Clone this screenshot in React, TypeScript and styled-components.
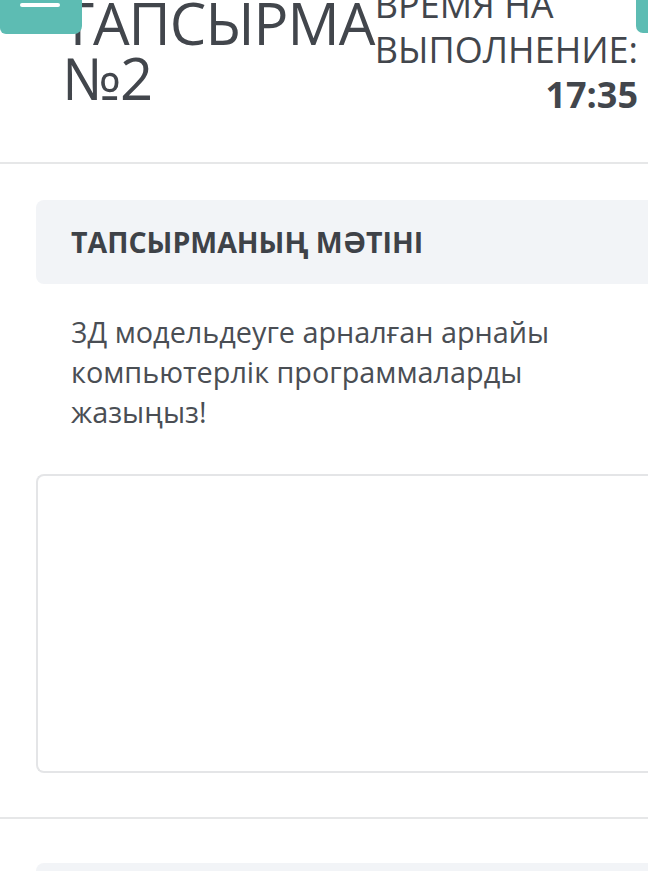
import React from "react";
import styled, { createGlobalStyle } from "styled-components";

const GlobalStyle = createGlobalStyle`
  html, body {
    margin: 0;
    padding: 0;
    background: #ffffff;
    font-family: "Open Sans", "Noto Sans", sans-serif;
    color: #42464c;
    overflow: hidden;
  }
`;

function App() {
  return (
    <>
      <GlobalStyle />
      <Page>
        <Header>
          <MenuButton aria-label="menu">
            <MenuBar />
          </MenuButton>
          <SideButton />
          <Title>
            ТАПСЫРМА
            <br />
            №2
          </Title>
          <Timer>
            <TimerLabel>
              ВРЕМЯ НА
              <br />
              ВЫПОЛНЕНИЕ:
            </TimerLabel>
            <TimerValue>17:35</TimerValue>
          </Timer>
        </Header>

        <Section>
          <Panel>
            <PanelTitle>ТАПСЫРМАНЫҢ МӘТІНІ</PanelTitle>
          </Panel>
          <TaskText>
            3Д модельдеуге арналған арнайы компьютерлік программаларды
            жазыңыз!
          </TaskText>
          <AnswerBox />
        </Section>

        <Section $top={44}>
          <Panel />
        </Section>
      </Page>
    </>
  );
}

export default App;

const Page = styled.div`
  width: 648px;
  height: 871px;
  overflow: hidden;
`;

const Header = styled.header`
  position: relative;
  margin-top: -18px;
  height: 182px;
  display: flex;
  align-items: flex-start;
  justify-content: space-between;
  padding: 0 10px 0 62px;
  border-bottom: 2px solid #e6e7e8;
  box-sizing: border-box;
`;

const MenuButton = styled.div`
  position: absolute;
  left: 0;
  top: 0;
  width: 82px;
  height: 52px;
  background: #5dbcb3;
  border-radius: 0 0 8px 6px;
  z-index: 2;
`;

const MenuBar = styled.div`
  position: absolute;
  left: 20px;
  top: 21px;
  width: 40px;
  height: 4px;
  border-radius: 2px;
  background: #ffffff;
`;

const SideButton = styled.div`
  position: absolute;
  right: -10px;
  top: 0;
  width: 22px;
  height: 51px;
  background: #5dbcb3;
  border-radius: 0 0 7px 7px;
`;

const Title = styled.h1`
  margin: 13px 0 0;
  font-size: 58px;
  line-height: 55px;
  font-weight: 400;
  color: #42464c;
  letter-spacing: -1px;
  white-space: nowrap;
`;

const Timer = styled.div`
  display: flex;
  flex-direction: column;
  align-items: flex-end;
`;

const TimerLabel = styled.div`
  font-size: 36px;
  line-height: 45px;
  color: #42464c;
  align-self: flex-start;
  white-space: nowrap;
`;

const TimerValue = styled.div`
  font-size: 36px;
  line-height: 46px;
  font-weight: 700;
  color: #42464c;
`;

const Section = styled.section<{ $top?: number }>`
  padding: ${({ $top }) => $top ?? 36}px 0 44px 36px;
  border-bottom: 2px solid #e6e7e8;
`;

const Panel = styled.div`
  height: 84px;
  display: flex;
  align-items: center;
  padding-left: 35px;
  background: #f2f4f7;
  border-radius: 8px 0 0 8px;
`;

const PanelTitle = styled.h2`
  margin: 0;
  font-size: 28.5px;
  font-weight: 700;
  color: #3e4248;
`;

const TaskText = styled.p`
  margin: 28px 0 0;
  padding: 0 40px 0 35px;
  font-size: 28.8px;
  line-height: 40px;
  color: #4a4e54;
`;

const AnswerBox = styled.div`
  margin-top: 42px;
  height: 299px;
  border: 2px solid #e4e5e7;
  border-right: none;
  border-radius: 8px 0 0 8px;
  box-sizing: border-box;
`;
